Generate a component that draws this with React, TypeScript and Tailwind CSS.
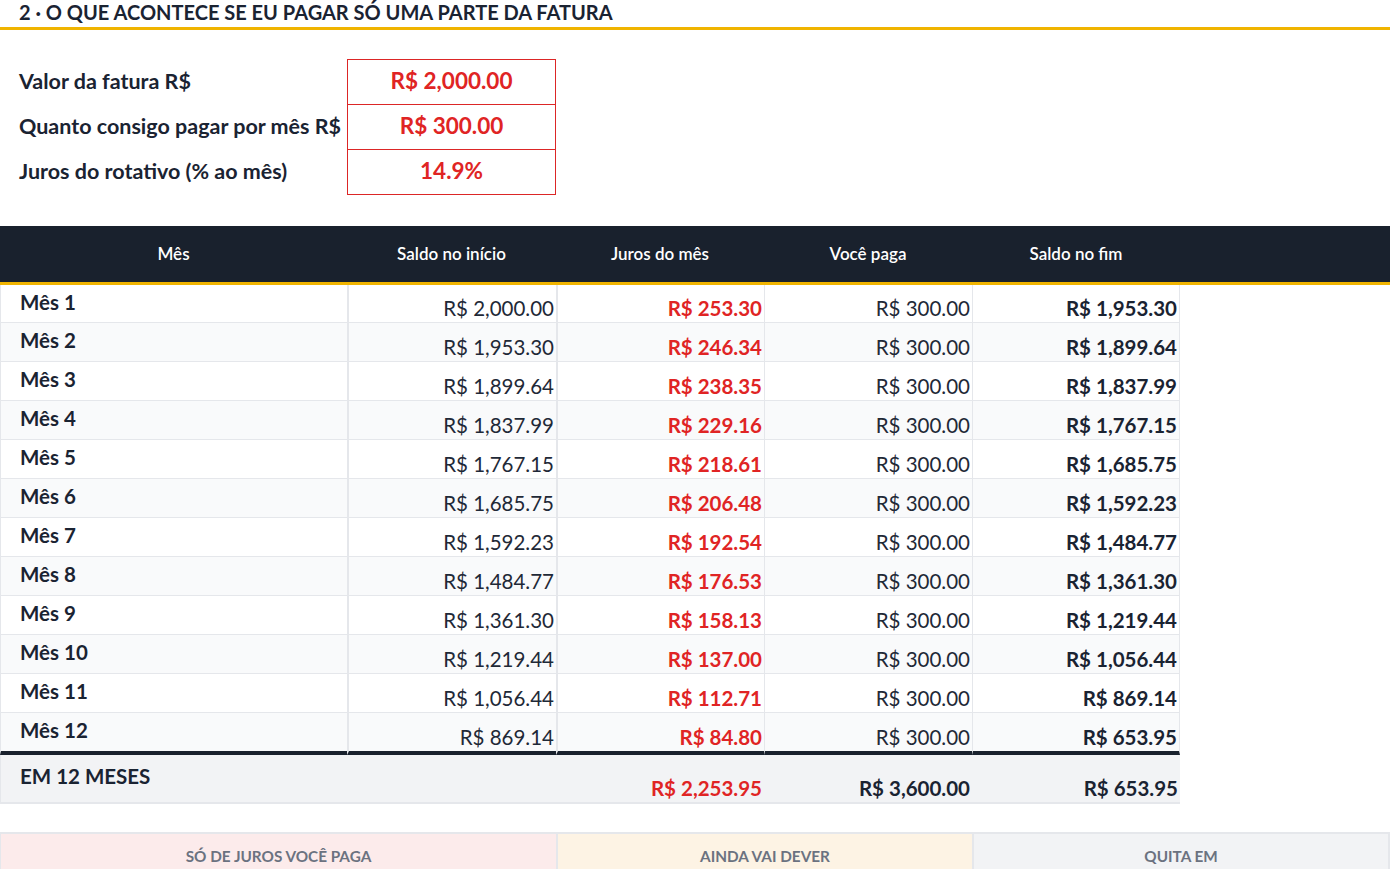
import React from "react";

const rows = [
  ["Mês 1", "R$ 2,000.00", "R$ 253.30", "R$ 300.00", "R$ 1,953.30"],
  ["Mês 2", "R$ 1,953.30", "R$ 246.34", "R$ 300.00", "R$ 1,899.64"],
  ["Mês 3", "R$ 1,899.64", "R$ 238.35", "R$ 300.00", "R$ 1,837.99"],
  ["Mês 4", "R$ 1,837.99", "R$ 229.16", "R$ 300.00", "R$ 1,767.15"],
  ["Mês 5", "R$ 1,767.15", "R$ 218.61", "R$ 300.00", "R$ 1,685.75"],
  ["Mês 6", "R$ 1,685.75", "R$ 206.48", "R$ 300.00", "R$ 1,592.23"],
  ["Mês 7", "R$ 1,592.23", "R$ 192.54", "R$ 300.00", "R$ 1,484.77"],
  ["Mês 8", "R$ 1,484.77", "R$ 176.53", "R$ 300.00", "R$ 1,361.30"],
  ["Mês 9", "R$ 1,361.30", "R$ 158.13", "R$ 300.00", "R$ 1,219.44"],
  ["Mês 10", "R$ 1,219.44", "R$ 137.00", "R$ 300.00", "R$ 1,056.44"],
  ["Mês 11", "R$ 1,056.44", "R$ 112.71", "R$ 300.00", "R$ 869.14"],
  ["Mês 12", "R$ 869.14", "R$ 84.80", "R$ 300.00", "R$ 653.95"],
];

const grid = "grid grid-cols-[347px_209px_208px_208px_208px_1fr]";

export default function App() {
  return (
    <div
      className="w-[1390px] h-[869px] overflow-hidden bg-white text-[#1a2332]"
      style={{ fontFamily: "Lato, 'Noto Sans', sans-serif" }}
    >
      {/* Title */}
      <div className="h-[30px] border-b-[3px] border-[#f0b400] pl-[19px]">
        <h1 className="text-[20px] font-bold leading-[25px] uppercase">
          2 · O que acontece se eu pagar só uma parte da fatura
        </h1>
      </div>

      {/* Inputs */}
      <div className="mt-[29px] grid grid-cols-[347px_209px]">
        <div className="flex flex-col">
          {[
            "Valor da fatura R$",
            "Quanto consigo pagar por mês R$",
            "Juros do rotativo (% ao mês)",
          ].map((l) => (
            <div key={l} className="h-[45px] flex items-center pl-[19px] text-[21.5px] font-bold">
              {l}
            </div>
          ))}
        </div>
        <div className="flex flex-col border border-[#dc2626]">
          {["R$ 2,000.00", "R$ 300.00", "14.9%"].map((v, i) => (
            <div
              key={v}
              className={
                i < 2
                  ? "h-[45px] flex items-center justify-center border-b border-[#dc2626] pb-[2px] text-[22.5px] font-bold text-[#e02424]"
                  : "h-[44px] flex items-center justify-center pb-[2px] text-[22.5px] font-bold text-[#e02424]"
              }
            >
              {v}
            </div>
          ))}
        </div>
      </div>

      {/* Table header */}
      <div className={`mt-[31px] ${grid} h-[59px] bg-[#19212d] border-b-[3px] border-[#f0b400] text-white text-[17px] font-semibold`}>
        {["Mês", "Saldo no início", "Juros do mês", "Você paga", "Saldo no fim", ""].map((h, i) => (
          <div key={i} className="flex items-center justify-center">
            {h}
          </div>
        ))}
      </div>

      {/* Rows */}
      {rows.map((r, i) => {
        const rowCls =
          i === 0
            ? "h-[38px] border-b border-[#e5e7eb]"
            : i === 11
            ? "h-[42px] border-b-4 border-[#19212d]"
            : "h-[39px] border-b border-[#e5e7eb]";
        const bg = i % 2 === 1 ? "bg-[#f9fafb]" : "bg-white";
        return (
          <div key={i} className={`${grid}`}>
            <div className={`${rowCls} ${bg} border-l border-l-[#e5e7eb] pl-[19px] pt-[4px] text-[20.5px] font-bold leading-[26px]`}>
              {r[0]}
            </div>
            <div className={`${rowCls} ${bg} border-l-2 border-l-[#e5e7eb] flex items-end justify-end pr-[2px] pb-[1px] text-[20.5px] leading-[26px] text-[#1f2937]`}>
              {r[1]}
            </div>
            <div className={`${rowCls} ${bg} border-l-2 border-l-[#e5e7eb] flex items-end justify-end pr-[2px] pb-[1px] text-[20.5px] font-bold leading-[26px] text-[#e02424]`}>
              {r[2]}
            </div>
            <div className={`${rowCls} ${bg} border-l border-l-[#e5e7eb] flex items-end justify-end pr-[2px] pb-[1px] text-[20.5px] leading-[26px] text-[#1f2937]`}>
              {r[3]}
            </div>
            <div className={`${rowCls} ${bg} border-l border-l-[#e5e7eb] border-r border-r-[#e5e7eb] flex items-end justify-end pr-[2px] pb-[1px] text-[20.5px] font-bold leading-[26px]`}>
              {r[4]}
            </div>
            <div />
          </div>
        );
      })}

      {/* Totals */}
      <div className={grid}>
        <div className="col-span-5 h-[49px] bg-[#f2f3f5] border-b-2 border-[#e5e7eb] border-l border-l-[#e5e7eb] grid grid-cols-[346px_209px_208px_208px_208px]">
          <div className="pl-[19px] pt-[8px] text-[20.5px] font-bold leading-[26px]">EM 12 MESES</div>
          <div />
          <div className="flex items-end justify-end pr-[2px] pb-[1px] text-[20.5px] font-bold leading-[26px] text-[#e02424]">
            R$ 2,253.95
          </div>
          <div className="flex items-end justify-end pr-[2px] pb-[1px] text-[20.5px] font-bold leading-[26px]">
            R$ 3,600.00
          </div>
          <div className="flex items-end justify-end pr-[2px] pb-[1px] text-[20.5px] font-bold leading-[26px]">
            R$ 653.95
          </div>
        </div>
        <div />
      </div>

      {/* Summary cards */}
      <div className="mt-[28px] grid grid-cols-[556px_416px_1fr] border-t-2 border-[#e5e7eb]">
        <div className="h-[60px] bg-[#fcebeb] border-l border-[#e5e7eb] flex justify-center pt-[11px] text-[15.3px] font-bold text-[#6b7280] uppercase">
          Só de juros você paga
        </div>
        <div className="h-[60px] bg-[#fdf3e4] border-l-2 border-[#e5e7eb] flex justify-center pt-[11px] text-[15.3px] font-bold text-[#6b7280] uppercase">
          Ainda vai dever
        </div>
        <div className="h-[60px] bg-[#f2f3f5] border-l-2 border-r-2 border-[#e5e7eb] flex justify-center pt-[11px] text-[15.3px] font-bold text-[#6b7280] uppercase">
          Quita em
        </div>
      </div>
    </div>
  );
}
